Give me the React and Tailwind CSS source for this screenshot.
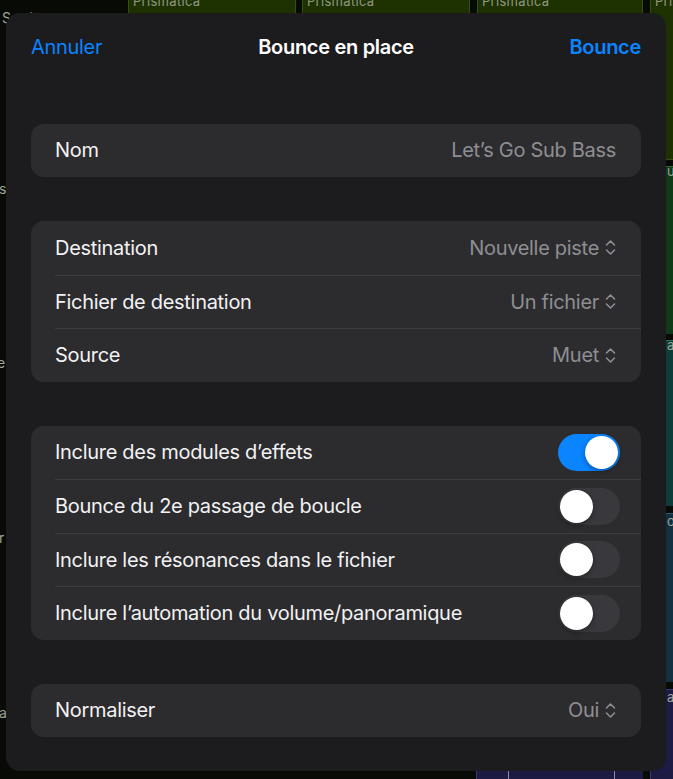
import React from "react";

const FONT = { fontFamily: "Inter, 'Noto Sans', 'Liberation Sans', sans-serif" };

function Chevrons() {
  return (
    <svg width="11" height="17" viewBox="0 0 11 17" fill="none" className="shrink-0">
      <path d="M1.5 6 L5.5 2 L9.5 6" stroke="#8e8e93" strokeWidth="1.6" strokeLinecap="round" strokeLinejoin="round" />
      <path d="M1.5 11 L5.5 15 L9.5 11" stroke="#8e8e93" strokeWidth="1.6" strokeLinecap="round" strokeLinejoin="round" />
    </svg>
  );
}

function Toggle({ on }) {
  return (
    <div
      className={
        on
          ? "w-[62px] h-[37px] rounded-full bg-[#0a84ff] flex items-center justify-end px-[2px]"
          : "w-[62px] h-[37px] rounded-full bg-[#39393d] flex items-center justify-start px-[2px]"
      }
    >
      <div className="w-[33px] h-[33px] rounded-full bg-white shadow-[0_2px_5px_rgba(0,0,0,0.35)]" />
    </div>
  );
}

function Row({ first, children, tight }) {
  return (
    <div className="h-[53.5px] pl-[24px] flex">
      <div
        className={
          (first ? "" : "border-t border-[#3c3c3f] ") +
          (tight ? "pr-[21px] " : "pr-[25px] ") +
          "flex-1 flex items-center justify-between"
        }
      >
        {children}
      </div>
    </div>
  );
}

function Label({ children }) {
  return <span className="text-[20px] text-[#f2f2f4] tracking-[-0.3px]">{children}</span>;
}

function Value({ children, chevron }) {
  return (
    <span className="flex items-center gap-[6px]">
      <span className="text-[20px] text-[#8e8e93] tracking-[-0.3px]">{children}</span>
      {chevron && <Chevrons />}
    </span>
  );
}

function Card({ children }) {
  return <div className="rounded-[13px] bg-[#2c2c2e] flex flex-col">{children}</div>;
}

function Background() {
  const clipTop = "absolute top-0 h-[160px] bg-[#1d3200] border-x border-b border-[#35500f] overflow-hidden";
  return (
    <div className="absolute inset-0 bg-[#070a05]">
      <span className="absolute left-[2px] top-[7px] text-[14px] text-[#9ea594]">Sortie</span>
      <div className={clipTop + " left-[128px] w-[168px]"}>
        <span className="absolute left-[4px] top-[-8px] text-[13px] text-[#8f9683] tracking-[0.3px]">Prismatica</span>
      </div>
      <div className={clipTop + " left-[302px] w-[168px]"}>
        <span className="absolute left-[4px] top-[-8px] text-[13px] text-[#8f9683] tracking-[0.3px]">Prismatica</span>
      </div>
      <div className={clipTop + " left-[477px] w-[166px]"}>
        <span className="absolute left-[4px] top-[-8px] text-[13px] text-[#8f9683] tracking-[0.3px]">Prismatica</span>
      </div>
      <div className={clipTop + " left-[650px] w-[40px]"}>
        <span className="absolute left-[4px] top-[-8px] text-[13px] text-[#8f9683] tracking-[0.3px]">Prismatica</span>
      </div>

      <div className="absolute left-[650px] top-[166px] w-[40px] h-[168px] bg-[#0f3a17] border-t border-l border-[#2a6a2a]" />
      <div className="absolute left-[650px] top-[340px] w-[40px] h-[166px] bg-[#0d3d3a] border-t border-l border-[#2a7066]" />
      <div className="absolute left-[650px] top-[513px] w-[40px] h-[169px] bg-[#12303f] border-t border-l border-[#2a5a70]" />
      <div className="absolute left-[650px] top-[689px] w-[40px] h-[100px] bg-[#1d1a43] border-t border-l border-[#3a3478]" />
      <div className="absolute left-[476px] top-[689px] w-[167px] h-[100px] bg-[#1d1a43] border-t border-l border-[#3a3478]">
        <div className="absolute left-[31px] top-[78px] w-[1px] h-[12px] bg-[#8a88b0]" />
        <div className="absolute left-[137px] top-[78px] w-[1px] h-[12px] bg-[#8a88b0]" />
      </div>

      <span className="absolute left-[667px] top-[162px] text-[13px] text-[#9ea594]">u</span>
      <span className="absolute left-[667px] top-[336px] text-[13px] text-[#9ea594]">a</span>
      <span className="absolute left-[667px] top-[512px] text-[13px] text-[#9ea594]">o</span>
      <span className="absolute left-[667px] top-[688px] text-[13px] text-[#9ea594]">a</span>

      <span className="absolute left-[-1px] top-[178px] text-[14px] text-[#9ea594]">s</span>
      <span className="absolute left-[-3px] top-[352px] text-[14px] text-[#9ea594]">el</span>
      <span className="absolute left-[-1px] top-[527px] text-[14px] text-[#9ea594]">r</span>
      <span className="absolute left-[-1px] top-[702px] text-[14px] text-[#9ea594]">a</span>
    </div>
  );
}

export default function App() {
  return (
    <div className="relative w-[673px] h-[779px] overflow-hidden" style={FONT}>
      <Background />
      <div className="absolute left-[6px] top-[13px] w-[660px] h-[758px] rounded-[14px] bg-[#1c1c1e] px-[25px] flex flex-col">
        <div className="h-[68px] grid grid-cols-[1fr_auto_1fr] items-center">
          <span className="text-[20px] text-[#0a84ff] tracking-[-0.3px]">Annuler</span>
          <span className="text-[20px] font-semibold text-white tracking-[-0.3px]">Bounce en place</span>
          <span className="text-[20px] font-semibold text-[#0a84ff] tracking-[-0.3px] justify-self-end">Bounce</span>
        </div>

        <div className="mt-[42.5px] flex flex-col gap-[44px]">
          <Card>
            <Row first>
              <Label>Nom</Label>
              <Value>Let’s Go Sub Bass</Value>
            </Row>
          </Card>

          <Card>
            <Row first>
              <Label>Destination</Label>
              <Value chevron>Nouvelle piste</Value>
            </Row>
            <Row>
              <Label>Fichier de destination</Label>
              <Value chevron>Un fichier</Value>
            </Row>
            <Row>
              <Label>Source</Label>
              <Value chevron>Muet</Value>
            </Row>
          </Card>

          <Card>
            <Row first tight>
              <Label>Inclure des modules d’effets</Label>
              <Toggle on />
            </Row>
            <Row tight>
              <Label>Bounce du 2e passage de boucle</Label>
              <Toggle />
            </Row>
            <Row tight>
              <Label>Inclure les résonances dans le fichier</Label>
              <Toggle />
            </Row>
            <Row tight>
              <Label>Inclure l’automation du volume/panoramique</Label>
              <Toggle />
            </Row>
          </Card>

          <Card>
            <Row first>
              <Label>Normaliser</Label>
              <Value chevron>Oui</Value>
            </Row>
          </Card>
        </div>
      </div>
    </div>
  );
}
